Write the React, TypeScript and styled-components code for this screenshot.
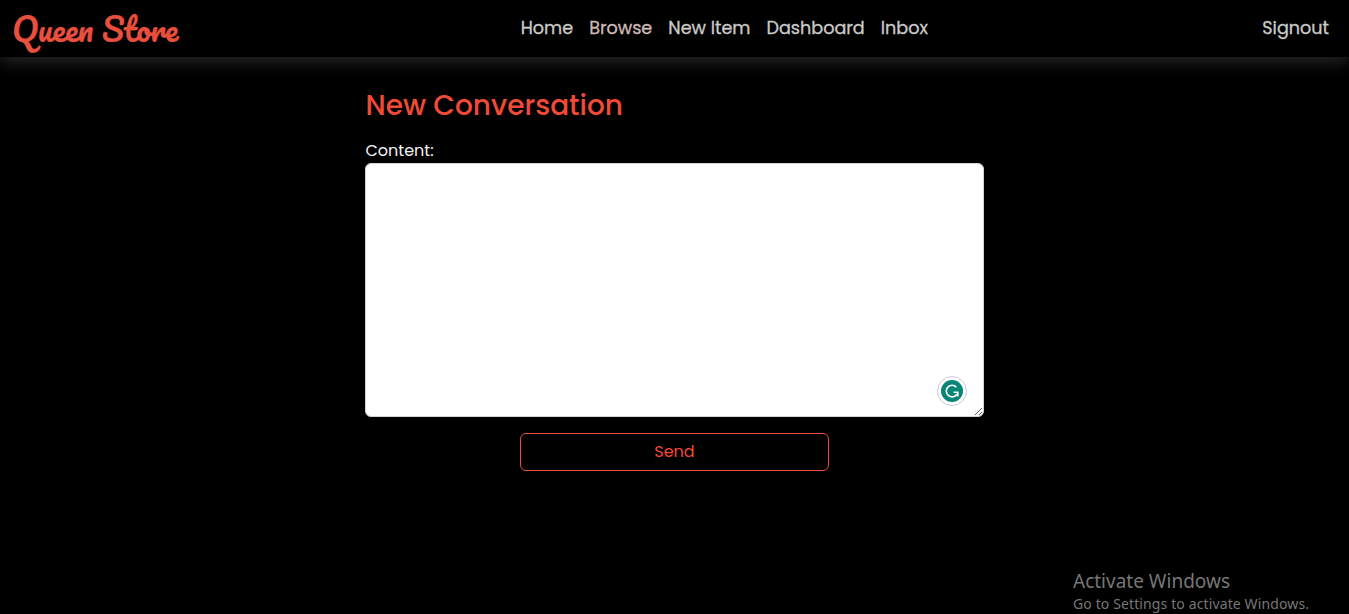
import React from "react";
import styled, { createGlobalStyle } from "styled-components";

const Global = createGlobalStyle`
  * { box-sizing: border-box; }
  html, body, #root { height: 100%; }
  body {
    margin: 0;
    background: #000;
    overflow: hidden;
    font-family: Poppins, Inter, "Open Sans", sans-serif;
  }
`;

const Page = styled.div`
  height: 614px;
  display: flex;
  flex-direction: column;
`;

const Navbar = styled.header`
  height: 57px;
  flex: none;
  display: grid;
  grid-template-columns: 520.7px 1fr auto;
  padding-right: 20px;
  background: #000;
  box-shadow: 0 5px 15px #262626;
`;

const Brand = styled.a`
  padding-left: 12px;
  color: #e94f3d;
  font: 400 32px/57px Pacifico, cursive;
  white-space: nowrap;
  -webkit-text-stroke: 0.2px currentColor;
`;

const Links = styled.nav`
  display: flex;
  gap: 16px;
`;

const NavLink = styled.a<{ $hovered?: boolean }>`
  color: ${(p) => (p.$hovered ? "#cdbab7" : "#cacaca")};
  font-size: 17.6px;
  line-height: 56px;
  white-space: nowrap;
  -webkit-text-stroke: 0.3px currentColor;
`;

const Main = styled.main`
  width: 619px;
  margin: 32px 0 0 365px;
  display: flex;
  flex-direction: column;
`;

const Title = styled.h1`
  margin: 0;
  padding-left: 0.5px;
  height: 34px;
  color: #f04a38;
  font-size: 28px;
  font-weight: 500;
  line-height: 34px;
  white-space: nowrap;
`;

const Label = styled.label`
  margin-top: 15px;
  padding-left: 0.5px;
  height: 25px;
  color: #f1f1f1;
  font-size: 16px;
  line-height: 25px;
`;

const Field = styled.div`
  position: relative;
  height: 254px;
`;

const Content = styled.textarea`
  display: block;
  width: 100%;
  height: 100%;
  padding: 6px 12px;
  border: 1px solid #ced4da;
  border-radius: 6px;
  background: #fff;
  outline: none;
`;

const AssistantBadge = styled.svg`
  position: absolute;
  right: 17px;
  bottom: 11px;
`;

const SendButton = styled.button`
  align-self: center;
  width: 309px;
  height: 38px;
  margin-top: 16px;
  padding: 0;
  border: 1px solid #e94f3d;
  border-radius: 6px;
  background: transparent;
  color: #f04a38;
  font: 400 16px/36px Poppins, Inter, sans-serif;
`;

const Watermark = styled.aside`
  position: absolute;
  left: 1073px;
  top: 569px;
  color: #777;
  font-family: "Segoe UI", "Noto Sans", "Open Sans", sans-serif;
  white-space: nowrap;
`;

const WatermarkTitle = styled.div`
  font-size: 19px;
  line-height: 25px;
`;

const WatermarkText = styled.div`
  font-size: 14px;
  line-height: 20px;
  letter-spacing: 0.12px;
`;

const links = [
  { label: "Home" },
  { label: "Browse", hovered: true },
  { label: "New Item" },
  { label: "Dashboard" },
  { label: "Inbox" },
];

export default function App() {
  return (
    <Page>
      <Global />
      <Navbar>
        <Brand>Queen Store</Brand>
        <Links>
          {links.map((l) => (
            <NavLink key={l.label} $hovered={l.hovered}>
              {l.label}
            </NavLink>
          ))}
        </Links>
        <NavLink>Signout</NavLink>
      </Navbar>
      <Main>
        <Title>New Conversation</Title>
        <Label htmlFor="content">Content:</Label>
        <Field>
          <Content id="content" />
          <AssistantBadge width="30" height="30" viewBox="0 0 30 30" fill="none">
            <circle cx="15" cy="15" r="14.5" fill="#fff" stroke="#c9c9dc" />
            <circle cx="15" cy="15" r="11" fill="#078577" />
            <path
              d="M19.4 11.2A5.8 5.8 0 1 0 20 18.2M16.6 16.2H20.8V20.4"
              stroke="#fff"
              strokeWidth="1.6"
            />
          </AssistantBadge>
        </Field>
        <SendButton type="button">Send</SendButton>
      </Main>
      <Watermark>
        <WatermarkTitle>Activate Windows</WatermarkTitle>
        <WatermarkText>Go to Settings to activate Windows.</WatermarkText>
      </Watermark>
    </Page>
  );
}
